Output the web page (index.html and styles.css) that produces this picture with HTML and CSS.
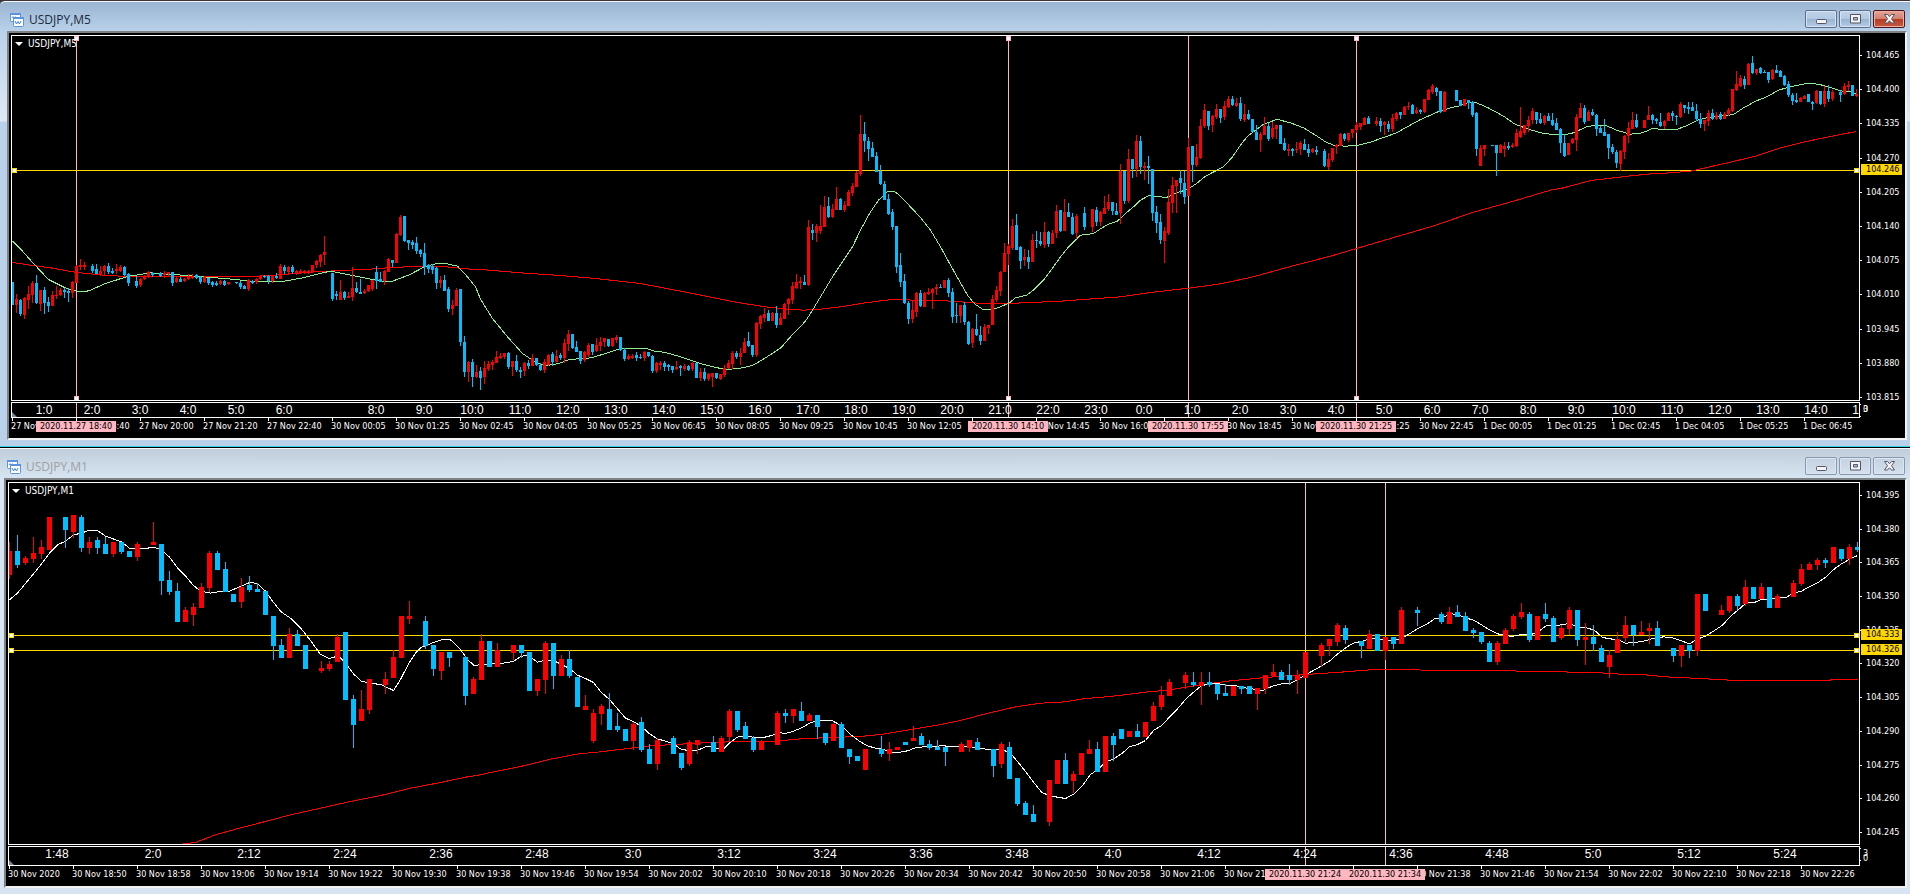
FILE: index.html
```html
<!DOCTYPE html>
<html lang="en">
<head>
<meta charset="utf-8">
<title>USDJPY charts</title>
<link rel="stylesheet" href="styles.css">
</head>
<body>
<svg width="0" height="0" class="defs" aria-hidden="true">
  <symbol id="icon-chart" viewBox="0 0 14 14">
    <rect x="0.5" y="0.5" width="10" height="8" rx="1" fill="#fff" stroke="#5b93dc"/>
    <path d="M0 1h11" stroke="#5b93dc" stroke-width="2"/>
    <path d="M2 5l1-1.500 1 2 1.500-2" fill="none" stroke="#5b93dc"/>
    <rect x="3.500" y="4.500" width="10" height="9" rx="1" fill="#fff" stroke="#5b93dc"/>
    <path d="M3 5h11" stroke="#5b93dc" stroke-width="2"/>
    <path d="M5 8l1.500 3 1.500-2.500 1.500 2.500L11 8" fill="none" stroke="#3f7fd2"/>
  </symbol>
  <symbol id="icon-min" viewBox="0 0 13 10">
    <rect x="1.500" y="5.500" width="10" height="4" rx="1" fill="#f4f4f4" stroke="#535666"/>
  </symbol>
  <symbol id="icon-max" viewBox="0 0 13 10">
    <path d="M1.500 0.500h10v8.500h-10z" fill="#f4f4f4" stroke="#535666"/>
    <path d="M4.500 3.500h4v2.500h-4z" fill="#a9bfd6" stroke="#535666"/>
  </symbol>
  <symbol id="icon-close" viewBox="0 0 13 10">
    <path d="M1.500 0.500h3l2 2.200 2-2.200h3L8.500 4.750l3 4.250h-3L6.500 6.800l-2 2.200h-3l3-4.250z" fill="#f4f4f4" stroke="#535666"/>
  </symbol>
</svg>

<section class="win win--active">
  <header class="bar">
    <svg class="bar__icon"><use href="#icon-chart"/></svg>
    <h1 class="bar__title">USDJPY,M5</h1>
    <div class="bar__buttons">
      <button class="wbtn" aria-label="Minimize"><svg><use href="#icon-min"/></svg></button>
      <button class="wbtn" aria-label="Maximize"><svg><use href="#icon-max"/></svg></button>
      <button class="wbtn wbtn--close" aria-label="Close"><svg><use href="#icon-close"/></svg></button>
    </div>
  </header>
  <div class="client" id="m5">
    <div class="plot plot--m5"><svg class="plot__svg"></svg><div class="plot__name">USDJPY,M5</div></div>
    <div class="prices prices--m5"></div>
    <div class="scale scale--m5"><svg class="scale__svg"></svg><div class="scale__labels scale__labels--m5"></div></div>
    <div class="range"><span>3</span><span>0</span></div>
    <div class="times"></div>
  </div>
</section>

<section class="win win--idle">
  <header class="bar">
    <svg class="bar__icon"><use href="#icon-chart"/></svg>
    <h1 class="bar__title">USDJPY,M1</h1>
    <div class="bar__buttons">
      <button class="wbtn" aria-label="Minimize"><svg><use href="#icon-min"/></svg></button>
      <button class="wbtn" aria-label="Maximize"><svg><use href="#icon-max"/></svg></button>
      <button class="wbtn" aria-label="Close"><svg><use href="#icon-close"/></svg></button>
    </div>
  </header>
  <div class="client" id="m1">
    <div class="plot plot--m1"><svg class="plot__svg"></svg><div class="plot__name">USDJPY,M1</div></div>
    <div class="prices prices--m1"></div>
    <div class="scale scale--m1"><svg class="scale__svg"></svg><div class="scale__labels"></div></div>
    <div class="range range--m1"><span>3</span><span>0</span></div>
    <div class="times"></div>
  </div>
</section>
<script src="charts.js"></script>
</body>
</html>
```

FILE: styles.css
```css
* { box-sizing: border-box; }

body {
  margin: 0;
  background: #3a3438;
  font-family: "DejaVu Sans Condensed", "DejaVu Sans", sans-serif;
  font-size: 9px;
  line-height: 11px;
  color: #fff;
}

.defs { position: absolute; }

/* window frame */
.win {
  border-top: 1px solid #3a3438;
  box-shadow: inset 0 1px 0 #f4f8fc;
}
.win--active {
  padding: 1px 3px 6px 7px;
  border-bottom: 1px solid #2fd3e6;
  border-radius: 5px 0 0 0;
  background: linear-gradient(#99b4d1 0, #b9d1ea 30px, #dfe9f6 120px, #b9d1ea 121px);
}
.win--idle {
  padding: 1px 3px 6px 4px;
  border-top-color: #000;
  background: linear-gradient(#bfcddb 0, #d7e4f2 30px);
}

.bar {
  display: flex;
  align-items: center;
  height: 29px;
  padding-left: 3px;
  padding-right: 2px;
}
.bar__icon { width: 14px; height: 14px; margin-top: 6px; }
.bar__title {
  flex: 1;
  margin: 6px 0 0 5px;
  font: 12px/16px "Open Sans", "Noto Sans", sans-serif;
  color: #1c2a3c;
}
.win--idle .bar__title { color: #a0a0a0; }
.bar__buttons { display: flex; gap: 2px; margin-top: 5px; }

.wbtn {
  display: flex;
  align-items: center;
  justify-content: center;
  width: 32px;
  height: 18px;
  padding: 0 0 1px;
  border: 1px solid #5c6f89;
  border-radius: 2px;
  background: linear-gradient(#bfd3e8 0, #b0c9e2 50%, #98b3d0 50%, #b5cde6 100%);
  box-shadow: inset 0 0 0 1px #d5e3f2;
}
.wbtn svg { width: 13px; height: 10px; }
.wbtn--close {
  border-color: #4c141c;
  background: linear-gradient(#e5a497 0, #d5806f 48%, #b83a22 50%, #c75a42 100%);
  box-shadow: inset 0 0 0 1px #eab0a4;
}
.win--idle .wbtn {
  border-color: #8a97ad;
  background: linear-gradient(#c4d1e0, #d3e0ee);
  box-shadow: inset 0 0 0 1px #dbe6f2;
}

/* chart area */
.client {
  display: grid;
  grid-template-columns: minmax(0, 1fr) 45px;
  row-gap: 1px;
  padding: 2px 0 0 2px;
  border: 2px solid #7f8285;
  border-right-color: #f3f3f3;
  border-bottom-color: #f3f3f3;
  background: #000;
}

.plot { position: relative; border: 1px solid #fff; }
.plot--m5 { height: 366px; }
.plot--m1 { height: 363px; }
.plot__svg,
.scale__svg {
  position: absolute;
  inset: 0;
  width: 100%;
  height: 100%;
  shape-rendering: crispEdges;
}
.plot__svg path,
.plot__svg polyline { fill: none; }
.plot__svg .up { fill: #f00; }
.plot__svg .down { fill: #00bfff; }
.plot__svg .slow { stroke: #f00; }
.plot__svg .fast { stroke: #90ee90; }
#m1 .fast { stroke: #fff; }
.level { stroke: #ffd700; }
.event { stroke: #ffb6c1; }
.level-grip { fill: #fff; stroke: #ffd700; }
.event-grip { fill: #fff; stroke: #ffb6c1; }

.plot__name {
  position: relative;
  display: flex;
  align-items: center;
  gap: 5px;
  padding: 2px 0 0 3px;
  font-size: 10px;
  line-height: 12px;
}
.plot__name::before {
  content: "";
  border: 4px solid transparent;
  border-top-color: #fff;
  border-bottom: 0;
}

.prices {
  position: relative;
  display: flex;
  flex-direction: column;
  justify-content: space-between;
}
.prices--m5 { padding-top: 14px; margin-bottom: -2px; }
.prices--m1 { padding: 7px 0; }
.price { position: relative; padding-left: 6px; line-height: 12px; }
.price::before {
  content: "";
  position: absolute;
  left: 0;
  top: 6px;
  width: 2px;
  height: 1px;
  background: #fff;
}
.price-tag {
  position: absolute;
  left: 1px;
  width: 41px;
  height: 11px;
  padding-left: 5px;
  background: #ffd700;
  color: #000;
}

.scale { position: relative; border: 1px solid #fff; overflow: hidden; }
.scale--m5 { height: 16px; }
.scale--m1 { height: 20px; }
.scale::after {
  content: "";
  position: absolute;
  left: 0;
  bottom: 0;
  border: solid transparent;
  border-width: 5px 5px 0 0;
  border-width: 5px 0 0 5px;
  border-left-color: #778899;
  border-top-color: transparent;
}
.scale__labels {
  position: relative;
  display: flex;
  font: 12px/14px "Liberation Sans", Arial, sans-serif;
}
.scale__labels--m5 { padding-left: 8px; }
.scale__labels span { flex: none; width: 96px; text-align: center; }
.scale__labels--m5 span { width: 48px; }
.scale__labels--m5 .after-gap { margin-left: 44px; }

.range { position: relative; height: 16px; }
.range span { position: absolute; left: 3px; top: 2px; }
.range--m1 span:last-child { top: 7px; }
.range::before {
  content: "";
  position: absolute;
  top: 2px;
  bottom: 1px;
  width: 1px;
  border: solid #fff;
  border-width: 1px 0;
}

.times {
  position: relative;
  grid-column: 1 / 3;
  display: flex;
  height: 20px;
  margin-top: -1px;
  overflow: hidden;
}
.time { position: relative; flex: none; width: 64px; padding-top: 3px; white-space: nowrap; }
.time::before {
  content: "";
  position: absolute;
  left: 1px;
  top: 0;
  width: 1px;
  height: 3px;
  background: #fff;
}
.time-tag {
  position: absolute;
  top: 3px;
  width: 80px;
  height: 11px;
  background: #ffb6c1;
  color: #000;
  text-align: center;
  white-space: nowrap;
}
```

FILE: charts.js
```js
// Bars: direction (r = up, b = down), then high, body top, body bottom, low.
// "-" is a minute without ticks. Heights are stored in thirds of a pixel.
const UNIT = 3;
const TOP = 36;

const m5 = {
  id: 'm5', left: 12, step: 4, half: 1, height: 364,
  bars: `b846 846 915 915,r882 897 915 939,b897 900 942 948,r891 894 945 957,r858 882 900 927,r843 849 885 909,b825 849 909 912,r870 870 912 933,b861 870 909 942,b891 906 918 936,
r873 885 918 918,r858 885 888 897,r864 870 885 888,b864 870 876 894,b864 873 879 906,r843 846 879 894,r795 798 849 849,r777 795 801 810,r786 795 801 810,-,
b792 798 813 819,b792 807 822 822,r798 813 822 828,r795 798 813 825,b789 798 816 822,b804 813 819 822,r792 807 813 822,r795 801 813 816,b798 801 825 828,b819 822 849 858,
-,b828 843 858 864,r834 837 855 861,r825 828 837 840,r813 816 831 834,b816 819 825 831,-,b816 819 828 831,r813 819 825 834,r816 816 822 828,
b816 816 849 858,r831 834 846 849,b831 837 846 846,r834 837 843 846,r822 831 837 840,r822 828 834 837,b822 825 834 837,b828 831 846 852,r828 831 846 849,b834 834 849 855,
b843 846 855 861,b843 849 855 858,r840 843 852 855,b840 843 855 858,r846 846 852 855,-,b846 846 849 852,b843 849 861 867,b855 858 867 867,r837 840 867 873,
b840 843 849 852,r834 837 846 852,r825 828 837 840,b825 828 831 834,b825 828 843 852,r825 828 843 849,b819 828 834 837,r792 798 837 837,b795 801 813 822,r798 801 816 822,
b795 801 816 822,r810 813 822 825,r807 813 819 822,r810 813 819 822,r810 813 819 822,r795 795 816 819,r780 783 795 804,r762 765 786 801,r708 756 765 795,-,
b819 819 897 903,b873 882 888 900,r840 876 900 900,b873 876 894 900,r876 888 894 894,r801 864 891 903,b846 864 876 879,b837 876 882 882,r867 873 879 882,r855 855 873 876,
r840 840 867 873,b798 816 843 867,b816 837 846 846,r810 813 843 855,r774 777 816 816,b780 780 789 801,r699 702 789 789,r645 651 705 708,b648 648 723 726,b720 720 729 750,
b720 726 735 747,b711 729 753 762,b747 750 762 771,b729 759 801 825,b792 795 807 819,b792 798 810 822,b801 804 849 867,r828 840 849 864,b825 840 873 873,b861 867 927 936,
r900 915 927 945,r864 870 918 918,b867 867 1026 1038,b1008 1026 1116 1131,r1083 1086 1116 1146,b1077 1086 1131 1161,r1095 1116 1131 1134,b1101 1113 1134 1170,r1083 1104 1131 1152,r1083 1092 1107 1113,
r1080 1086 1095 1110,r1053 1071 1089 1089,r1059 1068 1074 1077,r1059 1059 1071 1077,b1056 1059 1101 1107,r1083 1083 1101 1128,b1065 1083 1110 1116,b1101 1110 1116 1134,r1086 1089 1113 1128,b1080 1089 1098 1107,
r1062 1074 1098 1098,b1074 1074 1095 1098,b1089 1095 1110 1113,r1077 1086 1110 1119,r1062 1065 1095 1098,b1056 1062 1086 1098,r1050 1068 1086 1086,b1059 1065 1074 1080,r1017 1029 1074 1089,r990 1002 1032 1053,
b1002 1002 1044 1047,b1023 1041 1056 1056,b1053 1053 1083 1092,r1053 1056 1080 1086,r1029 1035 1065 1071,b1032 1032 1056 1065,r1014 1035 1053 1056,r1011 1026 1038 1053,r1014 1014 1026 1041,b1017 1017 1038 1041,
r1014 1014 1038 1041,r1005 1011 1020 1029,b1011 1011 1050 1053,b1044 1050 1077 1083,r1062 1068 1077 1080,r1062 1068 1074 1077,b1056 1065 1074 1083,b1062 1071 1074 1077,r1053 1056 1074 1083,b1056 1056 1068 1071,
b1065 1068 1113 1119,r1086 1089 1113 1119,r1083 1089 1095 1110,b1083 1089 1101 1113,b1092 1095 1101 1113,b1098 1098 1110 1119,r1083 1101 1107 1110,b1095 1098 1104 1128,r1092 1098 1107 1113,b1095 1098 1110 1113,
r1086 1089 1107 1113,b1089 1089 1134 1134,r1104 1116 1134 1143,b1104 1116 1137 1143,r1119 1122 1137 1143,r1119 1119 1131 1161,b1119 1119 1134 1137,r1122 1122 1137 1140,r1095 1104 1125 1131,r1080 1089 1104 1107,
r1053 1059 1092 1107,b1053 1059 1071 1077,r1044 1059 1071 1095,r1014 1026 1059 1059,b996 1023 1038 1041,b1035 1035 1065 1071,r966 969 1065 1071,r945 948 972 987,r924 942 954 966,b930 939 963 963,
r936 939 963 963,b918 939 975 984,r939 954 975 975,r909 912 957 957,r894 897 912 945,r846 858 900 912,r822 846 864 867,r831 843 849 867,b825 846 855 855,r660 681 855 858,
b672 690 699 720,r672 678 699 726,r615 678 693 702,r588 621 681 681,b591 618 651 654,r612 627 651 654,r561 597 630 630,b594 597 630 630,r603 615 630 636,r570 576 618 618,
r549 558 579 588,r513 519 561 561,r345 402 522 528,b366 402 423 456,b411 423 447 483,b426 444 471 471,b456 468 516 516,b495 513 552 555,b543 552 600 600,b582 597 642 645,
b627 636 681 690,b678 678 801 819,b759 795 846 861,b822 843 909 912,b903 909 957 972,r900 930 957 969,r876 879 936 951,b870 879 918 921,r876 879 921 921,r864 876 882 885,
r864 867 879 927,r852 861 867 885,b852 861 864 864,r840 840 864 864,b834 840 879 891,b864 876 951 969,b909 945 948 969,r915 915 948 969,b906 915 966 975,b963 966 1032 1035,
r984 987 1029 1044,b942 987 1005 1008,b978 1005 1023 1035,r972 981 1023 1023,r975 975 984 1002,r885 897 975 975,r858 870 900 906,r813 816 873 888,r729 759 816 816,r732 738 762 795,
r657 678 744 750,b642 675 750 750,b738 741 783 807,r747 771 780 798,b750 771 786 807,r702 720 786 786,b693 720 723 744,b696 723 732 738,r666 696 735 744,b693 696 732 741,
r690 699 732 732,r615 633 699 714,b630 630 693 696,r597 636 693 693,b609 636 651 651,b639 651 702 705,r642 648 699 717,-,b621 639 681 690,-,
r627 627 681 696,b621 630 666 678,r633 636 666 678,r588 624 642 642,r582 606 627 633,b606 606 633 645,b609 633 645 645,r492 513 639 672,b513 513 603 612,r447 477 603 609,
b477 477 507 534,r405 423 507 531,b408 423 501 522,r486 498 504 540,b468 498 504 552,b507 507 639 663,b618 636 669 699,b642 666 720 732,r681 693 723 789,r567 606 699 705,
r531 555 609 639,r540 540 558 639,b510 534 549 582,b513 549 591 612,r414 441 588 588,b438 438 495 546,r432 471 495 501,r357 378 474 477,r312 330 378 384,b333 333 378 390,
r345 348 375 396,r312 327 351 357,b327 327 354 369,r303 318 351 360,r288 297 321 324,b288 297 315 318,r294 309 318 321,b291 309 357 363,r312 342 360 366,b330 342 357 360,
b357 357 396 396,b375 396 420 420,r396 402 420 456,r351 378 405 405,b369 378 417 423,r366 384 411 417,r375 375 387 417,b375 375 432 432,b414 429 450 453,r432 447 453 468,
b444 447 453 468,r426 447 450 459,r423 429 447 465,b417 432 450 450,b432 447 459 471,r444 447 456 459,b438 450 456 465,-,b447 453 498 501,r459 477 501 510,
r444 444 480 486,r432 435 441 462,r399 402 438 438,b399 402 417 423,r399 399 420 426,r387 387 399 414,r366 375 390 399,r369 369 381 390,r351 354 375 375,b348 354 372 372,
-,r351 363 372 378,b354 363 378 396,r363 366 375 405,b363 372 387 396,r342 354 387 396,r336 339 357 363,b336 336 345 357,r318 321 345 345,r306 318 321 330,
b312 315 342 342,r321 330 339 342,b327 330 336 342,r297 297 336 339,r267 270 300 300,r252 258 276 282,b261 264 276 288,b273 273 336 339,r273 276 336 336,-,
-,b270 270 303 303,b300 300 318 318,r297 297 318 318,b300 300 309 327,b303 306 345 351,b336 339 447 468,r435 444 498 498,r435 435 447 468,-,
b435 435 438 438,b435 435 459 528,r432 435 459 459,r426 438 447 471,b426 438 444 450,r429 435 441 444,r387 399 438 441,r321 393 411 414,r375 375 399 405,r348 360 378 396,
r324 333 360 372,b336 336 360 372,b339 357 369 372,r345 348 369 375,b339 348 363 363,b339 360 375 378,b354 369 390 390,b384 387 429 459,b402 429 468 471,r429 429 465 465,
r414 417 429 432,r342 351 420 453,r309 324 354 354,b315 324 366 372,r330 336 363 363,b327 336 345 348,b342 345 387 408,b378 384 399 399,b357 396 408 408,b402 402 444 477,
b432 441 456 462,b450 456 489 504,r450 453 492 513,r405 408 456 477,r366 384 408 429,r336 360 387 387,b342 360 381 384,-,r360 360 384 384,r318 345 360 360,
b342 345 360 372,b354 357 363 372,b339 366 378 381,r360 363 378 387,r336 339 363 363,b333 339 348 363,b345 348 351 375,r306 312 351 354,b315 315 324 339,b306 321 327 342,
b306 321 333 333,b312 333 357 363,b339 357 372 384,r360 360 372 393,r330 339 363 378,b327 339 357 360,r336 345 357 360,b336 342 357 360,r336 342 357 357,r324 330 342 348,
r267 267 333 336,r213 252 270 273,r225 234 258 261,b228 237 255 267,r189 192 255 255,b168 189 219 222,r207 207 219 225,b201 204 219 222,b210 216 219 219,b216 216 240 249,
r207 210 237 240,b195 210 219 219,b210 213 231 231,b225 228 255 258,b243 252 285 291,b279 285 303 315,b279 300 306 309,r291 294 306 306,r285 288 297 297,b282 282 306 306,
b303 306 312 330,r270 273 309 312,b273 273 312 315,r258 273 312 321,b255 273 297 306,r270 276 297 303,-,b270 276 285 306,r249 258 282 285,r243 255 261 273,
b255 255 288 288,r267 282 288 291`,
  fast: `12 723 22 753 33 790 48 838 64 862 76 873 84 875 90 870 105 850 128 828 142 822 150 818 168 822 190 827 228 836 250 843 270 845 284 843 304 832 322 818 330 813 345 822 365 834 382 843 392 843 408 825 424 800 435 791 445 790 457 798 465 823 475 860 480 897 492 955 507 1010 522 1060 534 1084 545 1097 558 1090 570 1077 582 1076 592 1072 608 1057 618 1047 630 1045 646 1045 655 1054 664 1056 680 1070 700 1090 715 1102 727 1108 740 1104 752 1096 764 1075 780 1044 793 1000 805 963 812 930 820 890 832 830 843 780 852 740 860 690 869 640 878 600 887 575 894 574 900 588 910 620 920 652 930 690 940 740 950 795 960 848 967 885 974 911 982 927 992 928 1000 920 1009 908 1015 893 1026 885 1033 870 1043 840 1053 800 1060 770 1068 740 1080 705 1093 700 1100 686 1108 672 1117 663 1125 640 1133 620 1140 600 1148 587 1156 589 1166 592 1176 578 1187 568 1196 550 1205 528 1214 514 1223 500 1232 470 1240 435 1247 408 1255 390 1263 372 1271 364 1276 357 1290 368 1303 383 1315 405 1325 425 1334 436 1345 438 1357 436 1370 426 1383 412 1396 398 1408 378 1420 358 1430 345 1439 333 1450 323 1459 317 1469 306 1476 308 1487 322 1503 348 1515 373 1530 389 1542 399 1555 404 1570 401 1578 391 1586 380 1595 375 1606 377 1617 391 1630 402 1642 398 1652 385 1662 388 1675 389 1685 378 1697 360 1708 352 1720 348 1733 343 1742 325 1755 303 1767 289 1778 270 1786 263 1794 257 1806 250 1818 252 1830 262 1840 272 1850 275 1856 281`,
  slow: `12 787 30 795 50 803 76 817 110 827 140 829 250 829 275 825 310 816 340 811 370 807 395 801 440 798 465 806 480 808 520 818 555 825 595 835 640 850 680 873 705 888 735 906 765 920 785 927 803 930 820 927 845 918 865 908 885 900 900 897 915 901 945 902 965 906 985 911 1015 909 1060 903 1120 890 1150 877 1188 864 1218 852 1250 832 1290 799 1330 768 1356 745 1400 706 1430 680 1440 670 1473 636 1495 618 1520 597 1535 583 1550 570 1563 563 1590 541 1605 536 1630 527 1650 521 1670 518 1690 513 1705 503 1730 486 1755 468 1780 443 1800 428 1820 415 1840 403 1856 394`,
  levels: [{ y: 170, price: '104.246' }],
  events: [
    { x: 76, label: '2020.11.27 18:40', grips: true },
    { x: 1008, label: '2020.11.30 14:10', grips: true },
    { x: 1188, label: '2020.11.30 17:55' },
    { x: 1356, label: '2020.11.30 21:25', grips: true }
  ],
  topPrice: 104465, priceStep: 65,
  scale: ['1:0', '2:0', '3:0', '4:0', '5:0', '6:0', '8:0', '9:0', '10:0', '11:0', '12:0', '13:0', '14:0', '15:0', '16:0', '17:0', '18:0', '19:0', '20:0', '21:0', '22:0', '23:0', '0:0', '1:0', '2:0', '3:0', '4:0', '5:0', '6:0', '7:0', '8:0', '9:0', '10:0', '11:0', '12:0', '13:0', '14:0', '15:0'],
  gapBefore: 6,
  times: ['27 Nov 2020', '27 Nov 18:40', '27 Nov 20:00', '27 Nov 21:20', '27 Nov 22:40']
    .concat(series('30 Nov', 5, 80, 18), series('1 Dec', 5, 80, 6))
};

const m1 = {
  id: 'm1', left: 9, step: 8, half: 2, height: 361,
  bars: `r285 312 384 396,b264 312 354 363,r327 333 348 354,r270 318 336 348,r279 300 321 336,r210 210 309 309,-,b210 210 249 303,r204 204 255 273,b204 210 303 315,
r270 285 303 321,b270 279 303 321,b270 291 321 321,r285 285 321 330,b285 285 315 321,b312 312 330 330,r285 291 330 342,-,r225 285 294 294,b291 291 402 444,
b372 399 435 444,b408 432 525 525,r480 489 525 525,r468 480 504 537,r408 420 483 483,r312 318 423 435,b312 318 369 369,b345 366 435 435,b441 441 465 465,r393 420 465 483,
b387 414 429 435,b408 426 435 435,b432 432 504 504,b507 507 597 639,b576 594 633 633,r543 561 633 633,b549 561 597 597,b594 594 666 666,-,r642 663 672 678,
r642 651 666 672,r561 570 645 645,b555 555 759 759,b744 756 834 903,r729 786 822 822,r696 696 789 801,-,r675 696 714 741,r609 630 693 693,r507 507 633 633,
r462 507 516 531,-,b507 522 597 606,b594 594 666 687,r615 615 672 699,b615 615 633 660,-,b627 630 747 774,r690 696 741 741,r561 582 699 699,
b582 582 660 660,r588 609 660 660,-,r594 594 618 639,b594 594 618 633,b615 615 732 732,r696 696 732 747,r582 588 699 741,b588 588 687 726,r624 636 687 687,
b609 636 687 693,b690 690 780 780,r744 777 789 789,r786 798 882 888,r771 777 801 834,b738 786 849 849,b798 837 849 855,b846 846 882 882,r825 831 882 909,b810 825 909 915,
b891 906 951 951,r873 879 951 969,-,b867 873 921 921,b918 918 963 969,r879 885 951 957,r879 879 894 921,-,b867 885 915 915,r867 873 915 915,
r786 792 870 882,b792 792 849 855,b825 837 876 876,b867 873 909 915,r879 882 909 909,-,r792 798 894 894,b786 798 807 828,r786 786 807 828,b765 792 822 822,
r798 804 822 822,b804 804 840 876,b858 858 888 894,r828 831 882 882,b825 831 903 903,b906 906 930 951,b927 927 942 942,r906 906 969 969,-,b867 906 921 930,
r885 906 921 942,r900 900 909 909,b885 885 894 894,r837 873 882 882,b858 867 894 894,b879 891 903 909,b879 900 909 909,b900 900 915 957,-,r885 891 915 915,
r879 879 903 915,b873 885 909 909,-,b906 906 957 990,r885 891 951 963,b885 900 996 996,b993 993 1071 1077,b1062 1068 1104 1104,b1074 1101 1125 1125,-,
r999 999 1125 1137,r939 939 1011 1011,b918 939 1011 1011,r972 981 1002 1038,r918 918 984 984,r879 906 921 921,b885 906 975 975,r867 867 975 975,b858 867 894 942,b846 846 876 876,
r852 852 870 870,b831 852 870 870,r825 825 870 870,r765 777 822 822,r717 744 780 789,r696 705 747 747,-,r675 684 708 726,b675 705 714 720,r675 705 717 774,
b675 705 714 720,b711 711 741 759,b711 738 747 747,r717 717 747 747,b717 717 726 741,b717 717 741 741,r723 723 741 789,r684 684 726 741,r651 675 687 690,b669 675 699 699,
b651 684 699 714,r669 684 699 741,r615 615 693 693,-,r588 594 627 660,r576 576 597 627,r528 534 585 597,b534 543 579 591,-,b582 582 597 633,
r549 561 606 606,b561 561 612 612,r570 570 612 639,b570 570 591 606,r480 489 591 591,-,b480 489 498 537,-,-,b495 501 525 531,
r480 495 531 531,b474 495 510 510,b495 507 552 552,b543 549 558 573,b555 555 585 591,b582 588 645 645,r582 588 645 654,r543 549 591 591,r501 507 546 552,r468 495 510 516,
b495 501 579 585,r507 507 579 579,b468 501 516 525,b507 513 585 585,r534 543 573 579,r480 489 546 564,b489 489 579 597,r528 570 579 654,b534 570 591 612,b594 603 645 645,
r609 624 660 693,r555 576 618 618,r507 534 573 585,b534 534 564 597,r522 555 564 564,r528 543 552 591,b522 543 597 597,-,b603 603 627 645,r594 594 627 660,
b594 594 612 633,r441 441 612 627,b441 441 492 492,-,r474 489 504 504,r447 447 492 498,b441 447 477 489,r399 420 471 477,b420 420 456 456,r408 420 456 456,
b420 420 483 483,r441 447 483 483,-,r399 408 450 450,r351 366 411 417,r345 351 369 369,r333 339 354 369,b333 339 348 363,r300 300 348 348,b306 306 336 342,
r291 300 336 354,b285 300 309 315`,
  fast: `9 458 17 438 33 380 41 350 49 318 57 293 65 282 73 263 81 258 88 250 97 250 105 267 121 284 129 303 145 304 153 300 161 307 169 330 177 362 186 390 193 415 200 432 210 438 217 434 228 433 241 417 249 406 257 409 265 432 273 466 281 495 290 513 300 542 310 580 320 622 329 634 338 626 345 648 353 680 361 703 370 707 382 714 393 730 400 697 408 650 415 618 421 600 428 592 435 584 442 577 450 578 458 600 468 640 474 656 480 652 500 649 508 646 514 641 520 628 527 624 537 645 545 639 553 640 561 652 569 664 577 684 585 694 593 706 600 733 609 757 617 785 625 813 633 823 641 838 649 860 657 875 665 882 673 890 680 905 690 912 698 908 705 899 712 899 717 904 724 903 730 885 737 870 745 866 752 870 763 871 771 865 778 856 785 859 793 852 801 842 811 825 822 820 832 821 841 836 850 862 858 880 866 895 875 903 883 907 892 915 900 915 907 911 915 902 925 898 935 898 942 895 950 899 960 898 977 902 990 908 1000 907 1009 915 1017 943 1025 973 1033 1005 1041 1035 1049 1046 1057 1050 1065 1054 1074 1040 1082 1015 1090 982 1098 966 1105 945 1113 935 1121 920 1129 899 1137 892 1145 880 1153 850 1161 835 1169 810 1177 785 1185 757 1193 735 1200 718 1208 709 1216 709 1226 714 1236 716 1244 722 1256 727 1262 730 1272 717 1281 710 1290 708 1296 700 1304 684 1313 670 1321 656 1329 642 1338 618 1346 600 1353 588 1363 581 1371 574 1378 577 1386 580 1394 580 1402 573 1410 558 1418 543 1426 532 1434 515 1441 512 1451 500 1457 502 1465 512 1474 520 1482 535 1490 550 1499 562 1511 568 1519 563 1531 562 1539 551 1546 535 1559 534 1569 529 1578 540 1588 543 1595 552 1602 571 1610 575 1619 580 1625 588 1634 586 1642 583 1650 576 1663 569 1672 572 1680 580 1689 590 1697 576 1705 567 1713 552 1722 534 1730 507 1739 485 1746 466 1753 467 1760 458 1770 457 1777 451 1786 450 1793 438 1801 432 1810 417 1818 405 1826 388 1834 365 1842 348 1850 335 1857 325`,
  slow: `183 1190 195 1186 215 1163 240 1142 265 1123 290 1103 320 1083 350 1063 380 1045 410 1023 440 1006 465 990 480 983 485 979 520 958 550 936 578 920 600 914 630 903 650 896 680 891 710 886 740 883 772 883 800 875 830 871 860 868 880 862 905 850 935 835 960 820 985 800 1015 779 1040 768 1065 764 1085 754 1110 748 1145 735 1170 728 1195 715 1230 701 1265 691 1305 682 1340 675 1370 668 1385 666 1413 668 1440 670 1515 671 1520 674 1560 674 1600 677 1620 681 1645 683 1665 689 1700 694 1735 700 1770 700 1828 700 1832 697 1857 697`,
  levels: [{ y: 188, price: '104.333' }, { y: 203, price: '104.326' }],
  events: [
    { x: 1305, label: '2020.11.30 21:24' },
    { x: 1385, label: '2020.11.30 21:34' }
  ],
  topPrice: 104395, priceStep: 15,
  scale: ['1:48'].concat(series('', 120, 12, 18).map(shortMinutes)),
  times: ['30 Nov 2020'].concat(series('30 Nov', 1130, 8, 28))
};

// Clock labels starting at a minute of the day, a fixed number of minutes apart.
function series(day, start, step, count) {
  const two = n => String(n).padStart(2, '0');
  return Array.from({ length: count }, (_, i) => {
    const t = start + i * step;
    return `${day} ${two(Math.floor(t / 60))}:${two(t % 60)}`;
  });
}
function shortMinutes(label) {
  const [h, m] = label.trim().split(':').map(Number);
  return `${h}:${m}`;
}

function draw(c) {
  const root = document.getElementById(c.id);
  const toY = v => Math.round(v / UNIT) - TOP;
  const paths = { r: '', b: '' };
  c.bars.split(',').forEach((bar, i) => {
    bar = bar.trim();
    if (bar === '-') return;
    const [h, t, b, l] = bar.slice(1).split(' ').map(v => toY(+v));
    const x = i * c.step;
    const bottom = Math.max(b, t + 1);
    const w = c.half * 2 + 1;
    let d = `M${x - c.half} ${t}h${w}V${bottom}h${-w}z`;
    if (h < t) d += `M${x} ${h}h1V${t}h-1z`;
    if (l > bottom) d += `M${x} ${bottom}h1V${l}h-1z`;
    paths[bar[0]] += d;
  });
  const line = s => {
    const n = s.split(' ').map(Number);
    let out = '';
    for (let i = 0; i < n.length; i += 2) {
      out += `${n[i] - c.left + 0.5},${((n[i + 1] - 1) / UNIT - TOP + 0.5).toFixed(2)} `;
    }
    return out;
  };
  const right = root.querySelector('.plot').clientWidth;
  const grip = (cls, x, y) => `<rect class="${cls}" x="${x - 1.5}" y="${y - 1.5}" width="4" height="4"/>`;
  const eventLine = e => `<line class="event" x1="${e.x - c.left + 0.5}" x2="${e.x - c.left + 0.5}" y1="0" y2="100%"/>`;

  let svg = c.events.map(eventLine).join('');
  c.levels.forEach(l => {
    svg += `<line class="level" x1="0" x2="100%" y1="${l.y - TOP + 0.5}" y2="${l.y - TOP + 0.5}"/>`;
  });
  svg += `<polyline class="slow" points="${line(c.slow)}"/><polyline class="fast" points="${line(c.fast)}"/>`;
  svg += `<path class="up" d="${paths.r}"/><path class="down" d="${paths.b}"/>`;
  c.levels.forEach(l => {
    svg += grip('level-grip', 2, l.y - TOP) + grip('level-grip', right - 3, l.y - TOP);
  });
  c.events.filter(e => e.grips).forEach(e => {
    svg += grip('event-grip', e.x - c.left, 2) + grip('event-grip', e.x - c.left, c.height - 2);
  });
  root.querySelector('.plot__svg').innerHTML = svg;
  root.querySelector('.scale__svg').innerHTML = c.events.map(eventLine).join('');

  let prices = '';
  for (let i = 0; i < 11; i++) {
    prices += `<div class="price">${((c.topPrice - i * c.priceStep) / 1000).toFixed(3)}</div>`;
  }
  c.levels.forEach(l => {
    prices += `<div class="price-tag" style="top:${l.y - TOP - 5}px">${l.price}</div>`;
  });
  root.querySelector('.prices').innerHTML = prices;

  root.querySelector('.scale__labels').innerHTML = c.scale
    .map((s, i) => `<span${i === c.gapBefore ? ' class="after-gap"' : ''}>${s}</span>`).join('');

  root.querySelector('.times').innerHTML =
    c.times.map(t => `<div class="time">${t}</div>`).join('') +
    c.events.map(e => `<div class="time-tag" style="left:${e.x - c.left - 39}px">${e.label}</div>`).join('');
}

function drawAll() {
  draw(m5);
  draw(m1);
}
drawAll();
window.addEventListener('resize', drawAll);
```
